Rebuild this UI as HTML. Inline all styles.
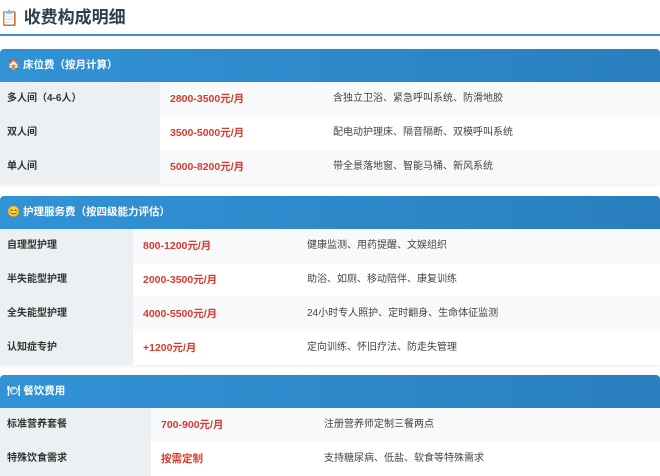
<!DOCTYPE html><html><head><meta charset="utf-8"><style>
body{margin:0;width:660px;height:471px;overflow:hidden;background:#fff;font-family:"Liberation Sans","Noto Sans CJK SC",sans-serif;color:#333}
h1{margin:0;position:absolute;left:0;top:3px;font-size:17px;font-weight:bold;color:#2c3e50;height:30px;line-height:30px;white-space:nowrap}
h1 span{font-size:15px;margin-right:5px}
.line{position:absolute;left:0;top:34px;width:660px;height:2px;background:#3a8fd0}
.sec{position:absolute;left:0;width:660px;box-shadow:0 1px 4px rgba(0,0,0,.08)}
.hd{height:33px;line-height:33px;background:linear-gradient(90deg,#3193d6,#2a7fbe);color:#fff;font-size:10.5px;font-weight:bold;padding-left:7px;border-radius:4px 4px 0 0}
.r{display:flex;height:34px;line-height:34px;font-size:10px}
.r:nth-child(even){background:#f7f9fb}.r:nth-child(odd){background:#fff}
.l{background:#ecf0f2;padding-left:7px;box-sizing:border-box;font-weight:bold;color:#333}
.p{color:#d63b2f;font-weight:bold;padding-left:10px;box-sizing:border-box;font-size:10.5px}
.d{color:#444}
</style></head><body>
<h1><span>📋</span>收费构成明细</h1><div class="line"></div>
<div class="sec" style="top:49px">
<div class="hd">🏠 床位费（按月计算）</div>
<div class="r"><div class="l" style="width:160px">多人间（4-6人）</div><div class="p" style="width:173px">2800-3500元/月</div><div class="d">含独立卫浴、紧急呼叫系统、防滑地胶</div></div>
<div class="r"><div class="l" style="width:160px">双人间</div><div class="p" style="width:173px">3500-5000元/月</div><div class="d">配电动护理床、隔音隔断、双模呼叫系统</div></div>
<div class="r"><div class="l" style="width:160px">单人间</div><div class="p" style="width:173px">5000-8200元/月</div><div class="d">带全景落地窗、智能马桶、新风系统</div></div>
</div>
<div class="sec" style="top:196px">
<div class="hd">😊 护理服务费（按四级能力评估）</div>
<div class="r"><div class="l" style="width:133px">自理型护理</div><div class="p" style="width:174px">800-1200元/月</div><div class="d">健康监测、用药提醒、文娱组织</div></div>
<div class="r"><div class="l" style="width:133px">半失能型护理</div><div class="p" style="width:174px">2000-3500元/月</div><div class="d">助浴、如厕、移动陪伴、康复训练</div></div>
<div class="r"><div class="l" style="width:133px">全失能型护理</div><div class="p" style="width:174px">4000-5500元/月</div><div class="d">24小时专人照护、定时翻身、生命体征监测</div></div>
<div class="r"><div class="l" style="width:133px">认知症专护</div><div class="p" style="width:174px">+1200元/月</div><div class="d">定向训练、怀旧疗法、防走失管理</div></div>
</div>
<div class="sec" style="top:375px">
<div class="hd">🍽 餐饮费用</div>
<div class="r"><div class="l" style="width:151px">标准营养套餐</div><div class="p" style="width:173px">700-900元/月</div><div class="d">注册营养师定制三餐两点</div></div>
<div class="r"><div class="l" style="width:151px">特殊饮食需求</div><div class="p" style="width:173px">按需定制</div><div class="d">支持糖尿病、低盐、软食等特殊需求</div></div>
</div>
</body></html>
